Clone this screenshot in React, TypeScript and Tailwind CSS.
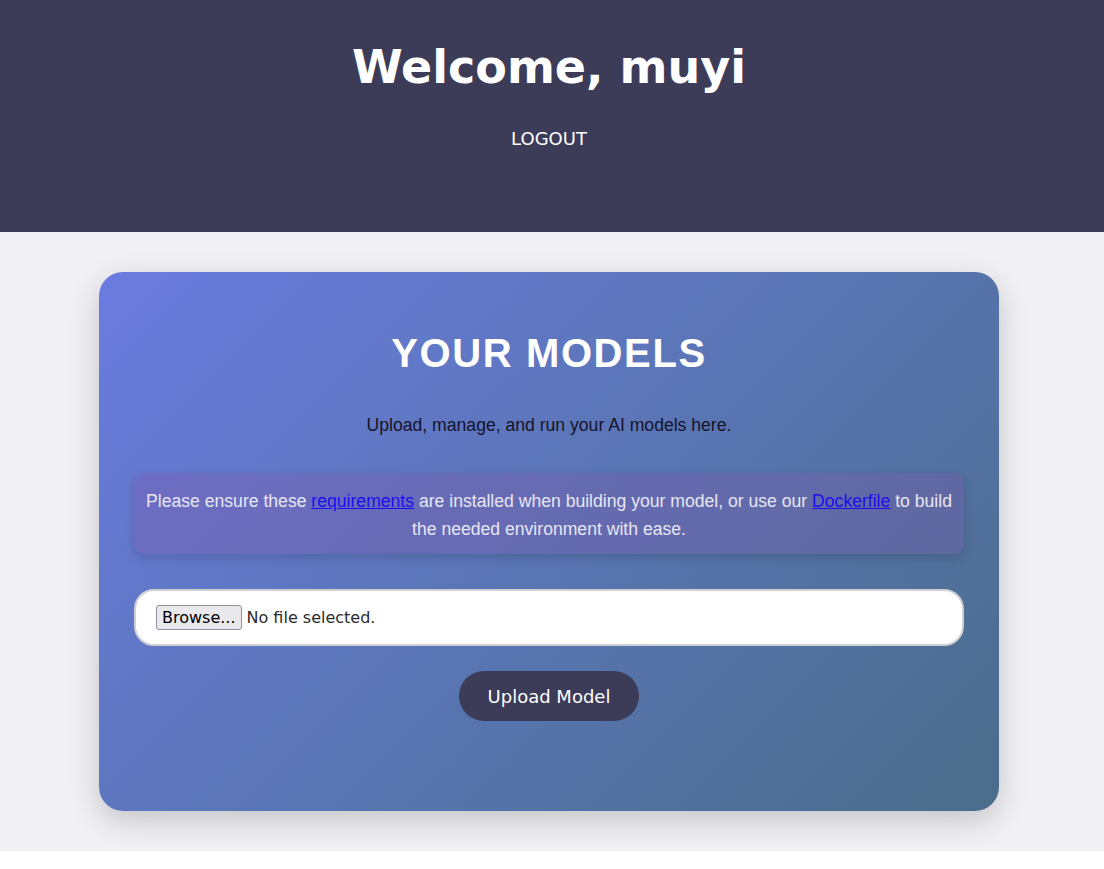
export default function App() {
  return (
    <div className="min-h-[869px] bg-white font-['DejaVu_Sans',sans-serif]">
      {/* Top bar */}
      <header className="h-[232px] bg-[#3c3b58] pt-[38px] pr-[6px] text-center text-white">
        <h1 className="text-[46px] font-bold leading-[58px]">Welcome, muyi</h1>
        <button className="mt-[32px] text-[18px] leading-[22px]">LOGOUT</button>
      </header>

      <main className="bg-[#f0f0f5] py-10 pr-[6px]">
        <section className="mx-auto w-[900px] rounded-[24px] bg-linear-135 from-[#6b7be0] to-[#4a6d8a] px-[35px] pt-[58px] pb-[90px] text-center shadow-[0_10px_30px_rgba(0,0,0,0.18)]">
          <h2 className="font-['Liberation_Sans',sans-serif] text-[40px] font-bold leading-[46px] tracking-[1.6px] text-white">
            YOUR MODELS
          </h2>
          <p className="mt-[39px] font-['Liberation_Sans',sans-serif] text-[17.6px] leading-[21px] text-[#14142a]">
            Upload, manage, and run your AI models here.
          </p>

          <div className="mt-[37px] rounded-[10px] bg-[#7a5aa8]/35 px-3 pt-[14px] pb-[11px] font-['Liberation_Sans',sans-serif] text-[17.6px] leading-[28px] text-[#e6e6f5] shadow-[0_4px_12px_rgba(0,0,0,0.15)]">
            Please ensure these{" "}
            <a href="#" className="text-[#1a0dee] underline">
              requirements
            </a>{" "}
            are installed when building your model, or use our{" "}
            <a href="#" className="text-[#1a0dee] underline">
              Dockerfile
            </a>{" "}
            to build the needed environment with ease.
          </div>

          <div className="mt-[35px] flex h-[57px] items-center rounded-[20px] border-2 border-[#cfcfd4] bg-white px-5 text-[16px] text-[#2b2b2b]">
            <span className="flex h-[25px] items-center rounded-[3px] border border-[#8f8f9d] bg-[#e9e9ed] px-[5px] text-black">
              Browse...
            </span>
            <span className="ml-[5px]">No file selected.</span>
          </div>

          <button className="mt-[25px] h-[50px] w-[180px] rounded-full bg-[#3c3b58] text-[18px] text-white">
            Upload Model
          </button>
        </section>
      </main>
    </div>
  );
}
